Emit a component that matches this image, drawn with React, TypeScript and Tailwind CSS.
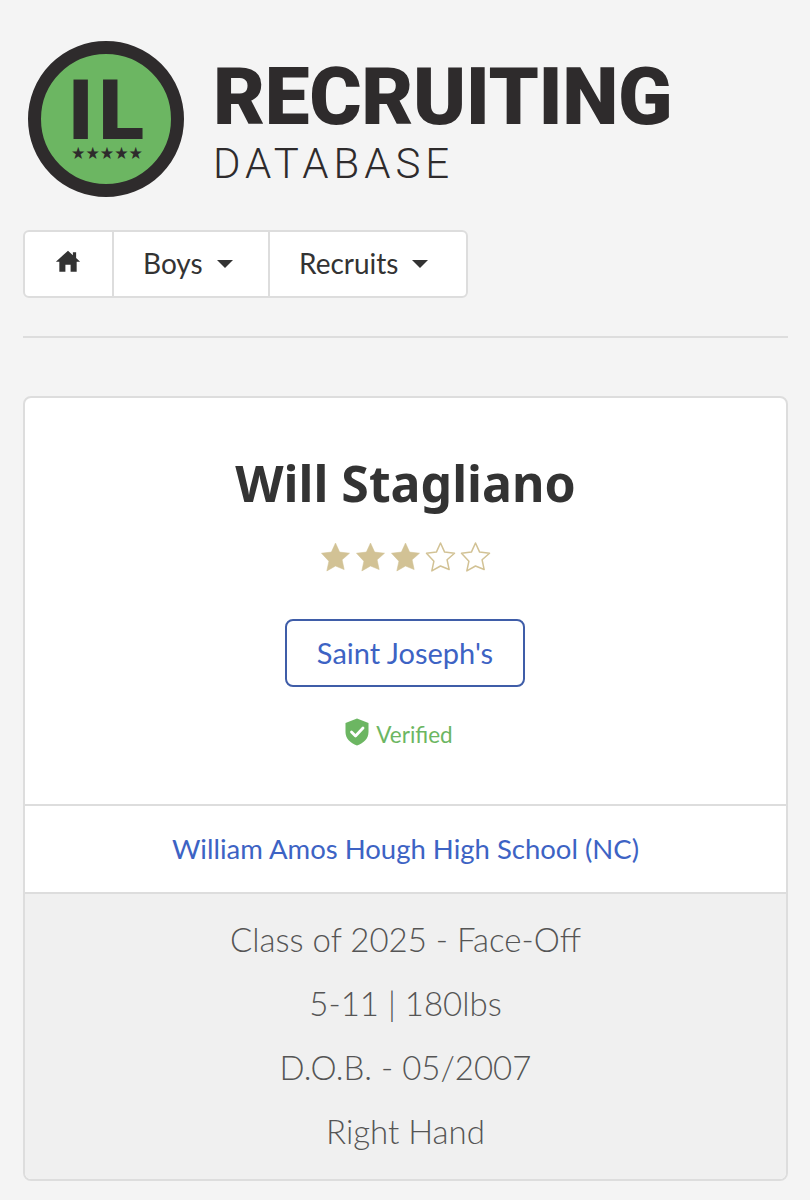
const star = "M12 2.2l3 6.6 7.2.8-5.4 4.8 1.500 7.1L12 18.900l-6.300 3.600 1.500-7.100L1.800 9.600 9 8.800z";

function Stars() {
  return (
    <div className="flex justify-center gap-[2px] h-[33px] mt-[24px] mr-[1px]">
      {[0, 1, 2, 3, 4].map((i) => (
        <svg key={i} viewBox="0 0 24 24" className="w-[33px] h-[33px]">
          <path
            d={star}
            fill={i < 3 ? "#d2c295" : "#ffffff"}
            stroke="#d2c295"
            strokeWidth={i < 3 ? 0.4 : 1.1}
            strokeLinejoin="round"
          />
        </svg>
      ))}
    </div>
  );
}

function Logo() {
  return (
    <div className="flex items-start pl-[28px] pt-[41px]">
      <svg viewBox="0 0 156 156" className="w-[156px] h-[156px] shrink-0">
        <circle cx="78" cy="78" r="71.5" fill="#6cb662" stroke="#2e2b2c" strokeWidth="13" />
        <text x="40" y="98" fontFamily="Roboto" fontWeight="900" fontSize="84" fill="#2e2b2c">I</text>
        <text x="70.500" y="98" fontFamily="Roboto" fontWeight="900" fontSize="84" fill="#2e2b2c">L</text>
        <text x="43" y="118" fontFamily="'DejaVu Sans'" fontSize="17" fill="#2e2b2c" textLength="72" lengthAdjust="spacingAndGlyphs">★★★★★</text>
      </svg>
      <div className="ml-[29px] mt-[16px] font-['Roboto'] text-[#2e2b2c] whitespace-nowrap">
        <div className="text-[80px] leading-[80px] font-black tracking-[-0.4px] h-[80px]">RECRUITING</div>
        <div className="text-[42px] leading-[42px] font-light tracking-[5px] mt-[6px]">DATABASE</div>
      </div>
    </div>
  );
}

function Caret() {
  return <span className="inline-block w-0 h-0 ml-[14px] border-x-[8.5px] border-x-transparent border-t-[8px] border-t-[#333333] translate-y-[1px]" />;
}

export default function App() {
  return (
    <div className="w-[810px] h-[1200px] overflow-hidden bg-[#f4f4f4] font-['Lato','Noto_Sans',sans-serif] text-[#333333]">
      <Logo />
      <div className="pl-[23px] pr-[22px] pt-[33px]">
        <nav className="flex w-fit h-[68px] bg-white border-2 border-[#dddddd] rounded-[6px] text-[28px] text-[#333333]">
          <div className="w-[89px] flex items-center justify-center border-r-2 border-[#dddddd]">
            <svg viewBox="0 0 24 24" className="w-[26px] h-[26px] mt-[-6px] ml-[-2px]" fill="#333333">
              <path d="M12 2.500 0.800 12.600h3.200V22h5.600v-6.500h4.800V22H20v-9.400h3.200L19.500 9.300V4h-3v2.600z" />
            </svg>
          </div>
          <div className="w-[156px] flex items-center pl-[29px] pb-[2px] border-r-2 border-[#dddddd]">
            Boys
            <Caret />
          </div>
          <div className="w-[196px] flex items-center pl-[29px] pb-[2px]">
            Recruits
            <Caret />
          </div>
        </nav>
        <div className="h-[2px] bg-[#dddddd] mt-[38px]" />
        <main className="mt-[58px] bg-white border-2 border-[#dddddd] rounded-[8px] overflow-hidden h-[785px]">
          <section className="h-[406px] pt-[52px] flex flex-col items-center">
            <h1 className="font-['Noto_Sans'] text-[50px] leading-[66px] font-bold text-[#333333]">Will Stagliano</h1>
            <Stars />
            <a className="mt-[46px] mr-[1px] w-[240px] h-[68px] flex items-center justify-center border-2 border-[#3f5da8] rounded-[8px] text-[29px] text-[#3d63c4]">
              Saint Joseph's
            </a>
            <div className="mt-[31px] mr-[13px] flex items-center text-[22.5px] text-[#6cb662]">
              <svg viewBox="0 0 24 28" className="w-[24px] h-[28px] mr-[7px] mt-[-6px]">
                <path d="M12 .5 23.500 5v9c0 6.500-4.600 11-11.500 13.500C5.100 25 .5 20.500.5 14V5z" fill="#6cb662" />
                <path d="M6.500 14l4 4 7.500-8" fill="none" stroke="#ffffff" strokeWidth="2.800" strokeLinecap="round" strokeLinejoin="round" />
              </svg>
              Verified
            </div>
          </section>
          <section className="h-[90px] border-y-2 border-[#dddddd] flex items-center justify-center text-[27.5px] text-[#3d63c4]">
            William Amos Hough High School (NC)
          </section>
          <section className="bg-[#f0f0f0] pt-[13px] flex flex-col items-center text-[33px] leading-[64px] font-light text-[#555555] h-[287px]">
            <div>Class of 2025 - Face-Off</div>
            <div>5-11 | 180lbs</div>
            <div>D.O.B. - 05/2007</div>
            <div>Right Hand</div>
          </section>
        </main>
      </div>
    </div>
  );
}
